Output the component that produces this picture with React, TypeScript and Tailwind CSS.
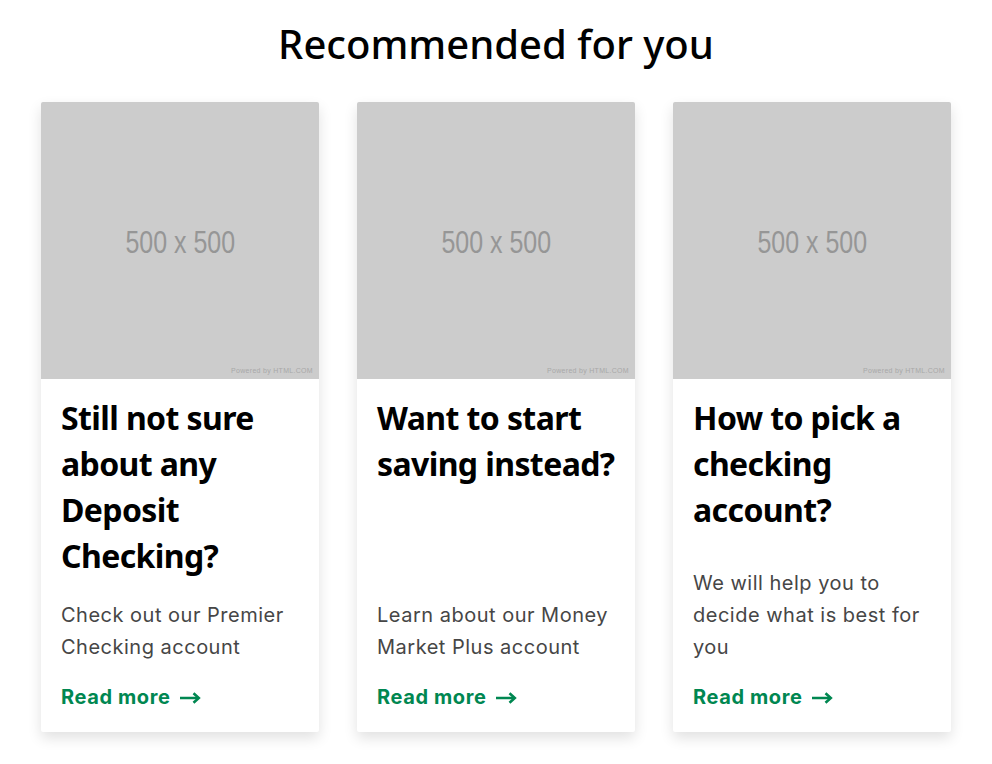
const cards = [
  {
    title: "Still not sure about any Deposit Checking?",
    body: "Check out our Premier Checking account",
  },
  {
    title: "Want to start saving instead?",
    body: "Learn about our Money Market Plus account",
  },
  {
    title: "How to pick a checking account?",
    body: "We will help you to decide what is best for you",
  },
];

function Placeholder() {
  return (
    <div className="relative flex h-[277px] w-full items-center justify-center bg-[#cccccc]">
      <span className="mt-[2px] scale-x-[0.78] font-['Liberation_Sans',Arial,sans-serif] text-[32px] text-[#969696]">
        500 x 500
      </span>
      <span className="absolute right-[6px] bottom-[3px] font-['Liberation_Sans',Arial,sans-serif] text-[7px] tracking-[0.3px] text-[#a8a8a8]">
        Powered by HTML.COM
      </span>
    </div>
  );
}

function ArrowRight() {
  return (
    <svg width="21" height="12" viewBox="0 0 21 12" className="mt-[1px]">
      <path d="M0 6h17.5" stroke="currentColor" strokeWidth="2.6" />
      <path d="M13.5 1.2 18.8 6l-5.3 4.8" fill="none" stroke="currentColor" strokeWidth="2.6" />
    </svg>
  );
}

export default function App() {
  return (
    <div className="min-h-[764px] bg-white px-[41px] pt-[18px] font-['Noto_Sans',sans-serif]">
      <h2 className="text-center text-[40px] leading-[52px] font-medium text-black">
        Recommended for you
      </h2>
      <ul className="mt-[32px] grid grid-cols-3 gap-[38px]">
        {cards.map((card) => (
          <li
            key={card.title}
            className="flex h-[630px] flex-col overflow-hidden rounded-[2px] bg-white shadow-[0_6px_14px_rgba(0,0,0,0.12)]"
          >
            <Placeholder />
            <div className="flex flex-1 flex-col px-[20px] pt-[16px] pb-[21px]">
              <h3 className="text-[32px] leading-[46px] font-bold tracking-[-0.6px] text-black">
                {card.title}
              </h3>
              <p className="mt-auto font-['Inter',sans-serif] text-[20px] leading-[32px] tracking-[0.5px] text-[#464646]">
                {card.body}
              </p>
              <a className="mt-[20px] flex items-center gap-[10px] font-['Inter',sans-serif] text-[20px] leading-[28px] font-bold tracking-[0.6px] text-[#008751]">
                Read more
                <ArrowRight />
              </a>
            </div>
          </li>
        ))}
      </ul>
    </div>
  );
}
